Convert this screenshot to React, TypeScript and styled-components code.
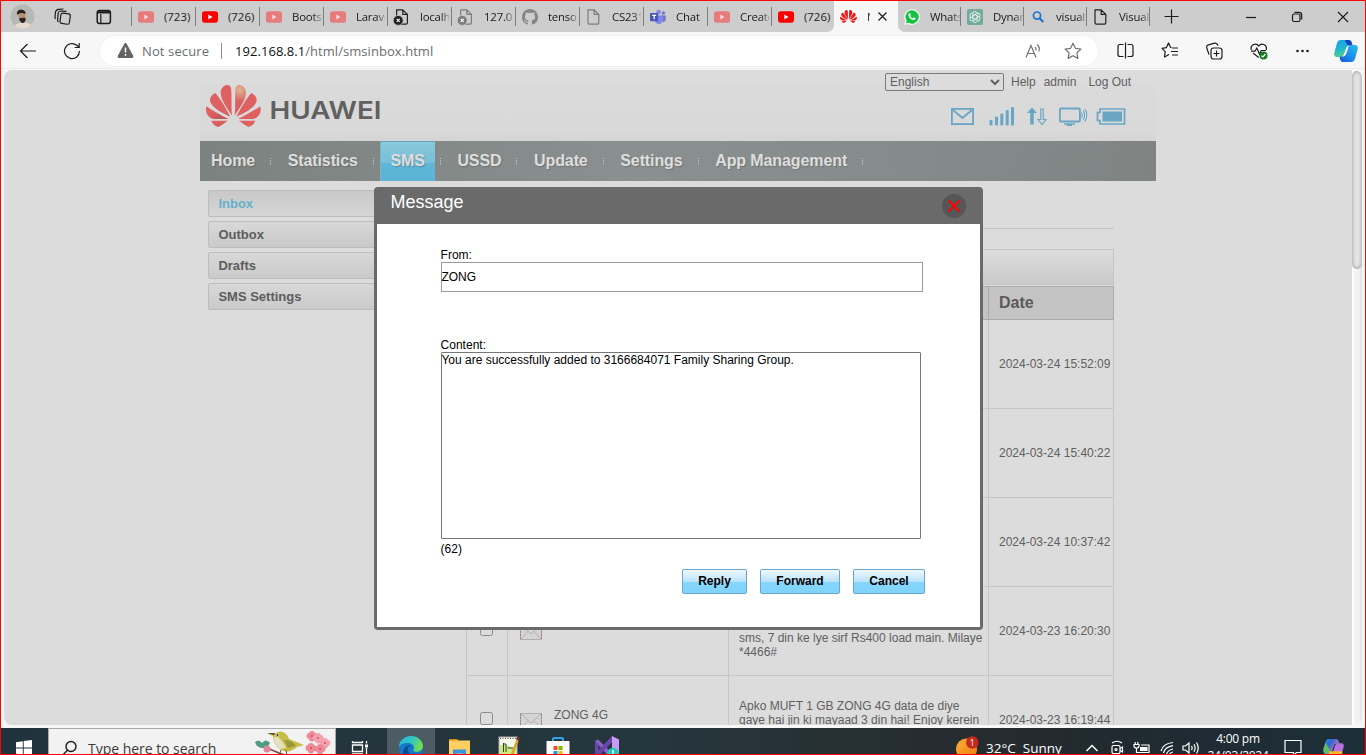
import React from "react";
import styled, { createGlobalStyle, css } from "styled-components";

const UI = `"Open Sans", "Noto Sans", sans-serif`;
const WEB = `"Liberation Sans", Arial, sans-serif`;

const Global = createGlobalStyle`
  *, *::before, *::after { box-sizing: border-box; }
  html, body { margin: 0; padding: 0; overflow: hidden; }
  svg { display: block; flex: none; }
`;

const Screen = styled.div`
  width: 1366px;
  height: 755px;
  border: 1px solid #fb0505;
  background: #f7f7f7;
  display: flex;
  flex-direction: column;
  overflow: hidden;
`;

/* ---------- Browser chrome ---------- */

const TabStrip = styled.div`
  height: 31px;
  flex: none;
  display: flex;
  background: #f7f7f7;
`;

const StripTools = styled.div`
  width: 130px;
  display: flex;
  align-items: center;
  padding-left: 9px;
  flex: none;
`;

const StripTool = styled.div<{ $before: number }>`
  margin-left: ${(p) => p.$before}px;
`;

const Tab = styled.div<{ $w: number }>`
  width: ${(p) => p.$w}px;
  flex: none;
  display: flex;
  align-items: center;
  padding-left: 6px;
`;

const TabDivider = styled.span`
  width: 1px;
  height: 19px;
  margin-top: 6px;
  background: #7d7d7d;
  flex: none;
`;

const TabTitle = styled.span<{ $w?: number }>`
  width: ${(p) => p.$w ?? 29}px;
  margin-left: 10px;
  overflow: hidden;
  white-space: nowrap;
  font: 11.4px/16px ${UI};
  letter-spacing: -0.2px;
  color: #1b1b1b;
  mask-image: linear-gradient(to right, #000 72%, rgba(0, 0, 0, 0.25));
`;

const FullTitle = styled(TabTitle)`
  mask-image: none;
  letter-spacing: 0;
`;

const ActiveTab = styled.div`
  width: 64px;
  flex: none;
  display: flex;
  align-items: center;
  padding-left: 6px;
  background: #f7f7f7;
  border-radius: 8px 8px 0 0;
`;

const CloseTab = styled.div`
  margin: 0 10px 0 auto;
`;

const StripSide = styled.div<{ $side: "left" | "right" }>`
  display: flex;
  background: #cdcdcd;
  ${(p) =>
    p.$side === "left"
      ? css`
          border-bottom-right-radius: 7px;
        `
      : css`
          border-bottom-left-radius: 7px;
          flex: 1;
        `}
`;

const WindowButtons = styled.div`
  margin-left: auto;
  display: flex;
  align-items: center;
  gap: 34px;
  padding-right: 16px;
`;

const NewTab = styled.div`
  display: flex;
  align-items: center;
  padding-left: 14px;
`;

const Toolbar = styled.div`
  height: 37px;
  flex: none;
  display: flex;
  align-items: center;
  padding: 1px 0 0 18px;
  border-bottom: 1px solid #ededed;
`;

const Reload = styled.div`
  margin-left: 26px;
`;

const AddressBar = styled.div`
  width: 998px;
  height: 30px;
  margin-left: 19px;
  padding: 0 16px 0 17px;
  border-radius: 15px;
  background: #fff;
  box-shadow: 0 0 2px rgba(0, 0, 0, 0.08);
  display: flex;
  align-items: center;
  font: 13px/20px ${UI};
  color: #6d6d6d;
`;

const NotSecure = styled.span`
  margin-left: 8px;
  width: 69px;
  white-space: nowrap;
  letter-spacing: 0.12px;
`;

const AddressDivider = styled.span`
  width: 1px;
  height: 16px;
  margin: 0 13px 0 10px;
  background: #8a8a8a;
`;

const Url = styled.span`
  white-space: nowrap;
  letter-spacing: 0.05px;
  b {
    font-weight: 400;
    color: #111;
  }
`;

const AddressTools = styled.div`
  margin-left: auto;
  display: flex;
  align-items: center;
  gap: 22px;
`;

const ToolbarIcons = styled.div`
  display: flex;
  align-items: center;
  padding-left: 19px;
  gap: 26.5px;
`;

const CopilotButton = styled.div`
  margin-left: -5px;
`;

/* ---------- Web page ---------- */

const Viewport = styled.div`
  height: 655px;
  margin: 1px 3px 3px 3px;
  flex: none;
  display: flex;
  background: #f6f6f6;
  border-radius: 8px;
  overflow: hidden;
`;

const PageArea = styled.div`
  width: 1348px;
  flex: none;
  height: 655px;
  position: relative;
  overflow: hidden;
  background: #dcdcdc;
  font-family: ${WEB};
  color: #606060;
`;

const Scrollbar = styled.div`
  width: 10px;
  flex: none;
  padding-top: 1px;
  background: #f3f3f3;
  box-shadow: inset 2px 0 2px #fff, inset -2px 0 2px #e2e2e2;
`;

const Thumb = styled.div`
  width: 10px;
  height: 198px;
  border-radius: 5px;
  background: #e6e6e6;
  box-shadow: inset 0 0 4px #8f8f8f;
`;

const Page = styled.div`
  width: 956px;
  margin-left: 196px;
`;

const Header = styled.header`
  height: 71px;
  display: flex;
  justify-content: space-between;
  background: linear-gradient(#dcdcdc 0 14px, #dadada 14px, #d9d9d9 88%, #d4d4d4);
`;

const Logo = styled.div`
  display: flex;
  gap: 7px;
  padding: 15px 0 0 6px;
`;

const WordmarkSlot = styled.div`
  padding-top: 14px;
`;

const HeaderRight = styled.div`
  width: 271px;
`;

const AccountRow = styled.div`
  display: flex;
  align-items: center;
  padding-top: 3px;
  font-size: 12px;
  height: 21px;
`;

const Language = styled.select`
  width: 119px;
  height: 18px;
  padding: 0;
  font: 12px ${WEB};
  color: #606060;
  background: #dcdcdc;
  border: 1px solid #7a7a7a;
  border-radius: 2px;
`;

const AccountLink = styled.a<{ $gap: number }>`
  margin-left: ${(p) => p.$gap}px;
  white-space: nowrap;
`;

const StatusRow = styled.div`
  display: flex;
  align-items: center;
  height: 20px;
  margin: 15px 0 0 66px;
`;

const StatusIcon = styled.div<{ $before: number }>`
  margin-left: ${(p) => p.$before}px;
`;

const Nav = styled.nav`
  height: 40px;
  display: flex;
  align-items: center;
  padding-left: 1px;
  background: linear-gradient(100deg, #7c8280 0%, #8a8f8f 45%, #868c8c 70%, #7f8483 100%);
`;

const NavItem = styled.a<{ $active?: boolean }>`
  height: 40px;
  padding: 0 10px;
  font: bold 16px/39px ${WEB};
  letter-spacing: -0.1px;
  color: #dedede;
  white-space: nowrap;
  text-shadow: 1px 1px 1px rgba(70, 70, 70, 0.35);
  ${(p) =>
    p.$active &&
    css`
      background: linear-gradient(#8cc9db, #77bfd8 54%, #5fb6d6 55%, #5cb4d6);
      box-shadow: inset 0 1px 0 #67a5ba, inset 1px 0 0 #77b4c8;
    `}
`;

const NavDots = styled.span`
  width: 1px;
  height: 8px;
  margin: 2px 6.6px 0 5px;
  background: repeating-linear-gradient(#c3c6c6 0 1px, transparent 1px 2px);
`;

const Body = styled.div`
  display: flex;
  padding: 9px 0 0 8px;
`;

const Sidebar = styled.div`
  width: 220px;
  display: flex;
  flex-direction: column;
  gap: 4px;
`;

const SideLink = styled.a<{ $active?: boolean }>`
  height: 27px;
  padding-left: 9.4px;
  border: 1px solid #bdbdbd;
  border-radius: 2px;
  font: bold 13px/25px ${WEB};
  color: ${(p) => (p.$active ? "#66b0c9" : "#5c5c5c")};
  background: ${(p) => (p.$active ? "linear-gradient(#c8c8c8, #d6d6d6)" : "linear-gradient(#d8d8d8, #cacaca)")};
`;

const Main = styled.div`
  width: 648px;
  margin-left: 38px;
`;

const TitleArea = styled.div`
  height: 39px;
  border-bottom: 1px solid #c4c4c4;
`;

const ActionStrip = styled.div`
  height: 36px;
  margin-top: 20px;
  border: 1px solid #c6c6c6;
  background: linear-gradient(#dcdcdc, #cbcbcb);
`;

const Table = styled.div`
  margin-top: 1px;
  font-size: 12px;
`;

const Row = styled.div<{ $head?: boolean }>`
  display: grid;
  grid-template-columns: 41px 221px 260px 125px;
  height: ${(p) => (p.$head ? 34 : 89)}px;
  border: solid ${(p) => (p.$head ? "#ababab" : "#c6c6c6")};
  border-width: ${(p) => (p.$head ? "1px 0 1px 1px" : "0 0 1px 1px")};
  background: ${(p) => (p.$head ? "#c4c4c4" : "transparent")};
`;

const Cell = styled.div<{ $head?: boolean; $center?: boolean }>`
  display: flex;
  align-items: center;
  padding-left: 10px;
  border-right: 1px solid ${(p) => (p.$head ? "#ababab" : "#c6c6c6")};
  line-height: 14px;
  white-space: nowrap;
  ${(p) =>
    p.$head &&
    css`
      font-size: 16px;
      font-weight: bold;
      color: #5a5a5a;
    `}
  ${(p) =>
    p.$center &&
    css`
      justify-content: center;
      padding: 0 1px 0 0;
    `}
`;

const Line = styled.div`
  height: 14px;
`;

const EnvelopeSlot = styled.span`
  padding: 2px 0 0 2px;
`;

const Sender = styled.span`
  margin: -11px 0 0 12px;
`;

const CheckBox = styled.span`
  width: 13px;
  height: 13px;
  margin-top: -4px;
  border: 1px solid #8b8b8b;
  border-radius: 2.5px;
`;

/* ---------- Message dialog ---------- */

const Dialog = styled.div`
  position: absolute;
  left: 370px;
  top: 117px;
  width: 609px;
  height: 443px;
  padding: 0 3px 3px;
  border-radius: 4px;
  background: #6a6a6a;
  color: #000;
  font-size: 12px;
`;

const DialogHead = styled.div`
  height: 37px;
  display: flex;
  justify-content: space-between;
  padding: 0 14px 0 13.5px;
  color: #fff;
  font-size: 18px;
  line-height: 30px;
`;

const CloseButton = styled.span`
  width: 24px;
  height: 24px;
  margin-top: 7px;
  border-radius: 50%;
  background: #565656;
  display: grid;
  place-items: center;
`;

const DialogBody = styled.div`
  height: 403px;
  padding: 24px 0 0 64px;
  background: #fff;
  display: flex;
  flex-direction: column;
`;

const Label = styled.label`
  height: 14px;
  line-height: 14px;
  text-indent: -0.4px;
`;

const FromField = styled.div`
  width: 482px;
  height: 30px;
  margin-bottom: 46px;
  border: 1px solid #999;
  line-height: 28px;
  text-indent: -0.6px;
`;

const ContentField = styled.div`
  width: 480px;
  height: 187px;
  border: 1px solid #767676;
  border-radius: 1px;
  line-height: 14px;
  text-indent: -0.6px;
`;

const Counter = styled.span`
  height: 14px;
  margin-top: 3px;
  line-height: 14px;
  text-indent: -0.4px;
`;

const Buttons = styled.div`
  width: 484px;
  margin-top: 13px;
  display: flex;
  justify-content: flex-end;
  gap: 13px;
`;

const ActionButton = styled.button<{ $w: number }>`
  width: ${(p) => p.$w}px;
  height: 25px;
  padding: 0 0 2px;
  border: 1px solid #6ba6d0;
  border-radius: 2px;
  background: linear-gradient(#f1f9ff, #b9e3fa 50%, #84d6fd 54%, #80d4fc);
  font: bold 12px ${WEB};
  color: #000;
`;

/* ---------- Taskbar ---------- */

const Taskbar = styled.div`
  height: 26px;
  flex: none;
  overflow: hidden;
`;

const TaskbarInner = styled.div`
  height: 40px;
  display: flex;
  background: linear-gradient(90deg, #20333c, #26363d 48%, #262b2e 72%, #202a30 82%, #1d2f39);
`;

const TaskSlot = styled.div<{ $w: number; $on?: boolean; $shift?: number }>`
  width: ${(p) => p.$w}px;
  flex: none;
  display: flex;
  align-items: center;
  justify-content: center;
  padding-right: ${(p) => p.$shift ?? 0}px;
  background: ${(p) => (p.$on ? "#4d5b62" : "transparent")};
`;

const SearchBox = styled.div`
  width: 288px;
  flex: none;
  display: flex;
  align-items: center;
  padding-left: 12px;
  border: 1px solid #a9a9a9;
  background: #f2f2f2;
  font: 14px/20px ${UI};
  color: #3c3c3c;
`;

const SearchText = styled.span`
  width: 160px;
  margin-left: 10px;
  padding-top: 1px;
  white-space: nowrap;
  letter-spacing: -0.03px;
`;

const BirdSlot = styled.div`
  margin-left: 11px;
`;

const Tray = styled.div`
  margin-left: auto;
  display: flex;
  align-items: center;
  color: #fff;
  font: 13.5px/20px ${UI};
`;

const Weather = styled.span`
  width: 78px;
  margin: 0 21px 0 7px;
  white-space: pre;
`;

const TrayIcon = styled.div<{ $before: number }>`
  margin-left: ${(p) => p.$before}px;
`;

const Clock = styled.div`
  width: 64px;
  margin: -2px 14px 0 6px;
  text-align: center;
  font: 12px/17px ${UI};
  letter-spacing: -0.25px;
`;

const CopilotSlot = styled.div`
  padding: 0 21px 0 21px;
`;

/* ---------- Drawings ---------- */

const YouTube = ({ faded }: { faded?: boolean }) => (
  <svg width="16" height="16" viewBox="0 0 16 16">
    <rect x="0" y="2.2" width="16" height="11.6" rx="2.8" fill={faded ? "#e67c7c" : "#fe0000"} />
    <path d="M6.3 5.6 L10.6 8 L6.3 10.4Z" fill={faded ? "#f2dada" : "#fff"} />
  </svg>
);

const PageIcon = ({ color = "#222", blocked }: { color?: string; blocked?: boolean }) => (
  <svg width="16" height="16" viewBox="0 0 16 16" fill="none" stroke={color} strokeWidth="1.2" overflow="visible">
    <g transform={blocked ? "translate(0 0)" : "translate(-.6 0)"}>
      <path d="M2.6 .8 H8.8 L13.4 5.4 V13.8 Q13.4 15.2 12 15.2 H4 Q2.6 15.2 2.6 13.8Z M8.8 .8 V5.4 H13.4" strokeLinejoin="round" />
    </g>
    {blocked && (
      <>
        <circle cx="4.2" cy="11.4" r="5" fill={color} stroke="#cdcdcd" strokeWidth=".8" />
        <path d="M2.7 9.9 L5.7 12.9 M5.7 9.9 L2.7 12.9" stroke="#fff" strokeWidth="1.1" />
      </>
    )}
  </svg>
);

const GitHub = () => (
  <svg width="16" height="16" viewBox="0 0 16 16" fill="#858585">
    <path d="M8 0C3.58 0 0 3.58 0 8c0 3.54 2.29 6.53 5.47 7.59.4.07.55-.17.55-.38 0-.19-.01-.82-.01-1.49-2.01.37-2.53-.49-2.69-.94-.09-.23-.48-.94-.82-1.13-.28-.15-.68-.52-.01-.53.63-.01 1.08.58 1.23.82.72 1.21 1.87.87 2.33.66.07-.52.28-.87.51-1.07-1.78-.2-3.64-.89-3.64-3.95 0-.87.31-1.59.82-2.15-.08-.2-.36-1.02.08-2.12 0 0 .67-.21 2.2.82.64-.18 1.32-.27 2-.27s1.36.09 2 .27c1.53-1.04 2.2-.82 2.2-.82.44 1.1.16 1.92.08 2.12.51.56.82 1.27.82 2.15 0 3.07-1.87 3.75-3.65 3.95.29.25.54.73.54 1.48 0 1.07-.01 1.93-.01 2.2 0 .21.15.46.55.38A8.01 8.01 0 0016 8c0-4.42-3.58-8-8-8z" />
  </svg>
);

const Teams = () => (
  <svg width="16" height="16" viewBox="0 0 16 16">
    <circle cx="13.4" cy="4" r="1.7" fill="#7177cf" />
    <path d="M10 6.4h5.8v4.2q0 2.4-2.4 2.6z" fill="#7177cf" />
    <circle cx="8.6" cy="3" r="2.3" fill="#8088e2" />
    <path d="M5 6.4h8v4.5q-.4 4-4.2 4.2-3.2 0-3.8-3z" fill="#8088e2" />
    <rect x="0" y="4" width="8.2" height="8.2" rx=".8" fill="#4b53bc" />
    <path d="M2.2 6.3h4M4.2 6.3v4" stroke="#fff" strokeWidth="1.2" />
  </svg>
);

const WhatsApp = () => (
  <svg width="16" height="16" viewBox="0 0 16 16">
    <path d="M8 .2a7.8 7.8 0 1 1-3.6 14.7L.3 15.8l1-4A7.8 7.8 0 0 1 8 .2Z" fill="#fff" />
    <path d="M8 1.3a6.7 6.7 0 1 1-3.3 12.5l-2.8.7.8-2.7A6.7 6.7 0 0 1 8 1.3Z" fill="#14c143" />
    <path d="M5.4 4.3c.5-.3.9 0 1 .4l.5 1.2-.7 1c.6 1.2 1.4 1.9 2.6 2.4l1-1 1.7.8c.4.8-.5 2-1.700 2-2.600-.2-5.400-2.900-5.400-5.300 0-.7.5-1.200 1-1.500Z" fill="#fff" />
  </svg>
);

const ChatGpt = () => (
  <svg width="16" height="16" viewBox="0 0 16 16" fill="none">
    <rect width="16" height="16" rx="2" fill="#74aa9c" />
    <g stroke="#e4f1ed" strokeWidth=".9">
      {[0, 60, 120, 180, 240, 300].map((a) => (
        <path key={a} transform={`rotate(${a} 8 8)`} d="M5.9 8 V4.6 Q6 2.6 8 2.5 Q9.6 2.5 10.3 3.9 M5.9 6.7 L8.9 5" />
      ))}
    </g>
  </svg>
);

const PETALS = [
  "M134 152 C137 128 134 90 137 68 Q141 59 150 60 Q164 62 168 80 C170 100 150 130 134 152Z",
  "M139 156 C150 135 165 105 184 84 C196 90 201 98 200 108 C196 128 165 145 139 156Z",
  "M144 163 C165 152 195 136 211 124 C214 140 210 158 188 163Z",
  "M147 168 L196 168 C192 180 180 187 174 186 C165 181 156 175 147 168Z",
];

const Flower = ({ w, h, bright }: { w: number; h: number; bright?: boolean }) => (
  <svg width={w} height={h} viewBox="48 60 165 127" preserveAspectRatio="none">
    <defs>
      <radialGradient id="glow" cx="150" cy="74" r="36" gradientUnits="userSpaceOnUse">
        <stop offset="0" stopColor="#dcb893" />
        <stop offset="1" stopColor="#dc6060" />
      </radialGradient>
      <linearGradient id="shade" x1="0" y1="1" x2="1" y2="0">
        <stop offset="0" stopColor="#b05252" />
        <stop offset=".6" stopColor="#e06060" />
      </linearGradient>
    </defs>
    {bright && <rect x="48" y="60" width="165" height="127" fill="#fff" />}
    {PETALS.map((d, i) => (
      <React.Fragment key={i}>
        <path d={d} fill={bright ? "#f01818" : i === 0 ? "url(#glow)" : "#df6060"} />
        <path d={d} transform="translate(260 0) scale(-1 1)" fill={bright ? "#f01818" : i > 1 ? "url(#shade)" : "#df6060"} />
      </React.Fragment>
    ))}
  </svg>
);

const Wordmark = () => (
  <svg width="116" height="24" viewBox="0 0 116 24">
    <text x="1.500" y="20.300" fontFamily="Inter, sans-serif" fontSize="24.500" fontWeight="600" fill="#606060" textLength="112" lengthAdjust="spacingAndGlyphs">
      HUAWEI
    </text>
  </svg>
);

const Envelope = () => (
  <svg width="22" height="16" viewBox="0 0 22 16" fill="none" stroke="#b0b0b0">
    <rect x=".5" y=".5" width="21" height="15" fill="#d4d4d4" stroke="#b0b0b0" />
    <path d="M1 1 L11 10 L21 1 M1 15 L8 7.5 M21 15 L14 7.5" />
    <path d="M.5 1V15M21.5 1V15" stroke="#cc7373" strokeDasharray="2 4" />
    <path d="M.5 4V15M21.5 4V15" stroke="#7386bb" strokeDasharray="2 4" />
  </svg>
);

const BLUE = "#6aa6c4";

const StatusIcons = () => (
  <StatusRow>
    <svg width="23" height="17" viewBox="0 0 23 17" fill="none" stroke={BLUE} strokeWidth="1.8">
      <rect x=".9" y=".9" width="21.2" height="15.2" />
      <path d="M2 2 L11.5 10 L21 2" />
    </svg>
    <StatusIcon $before={15}>
      <svg width="26" height="19" viewBox="0 0 26 19" fill={BLUE}>
        <rect x=".5" y="13" width="3" height="5.5" rx="1" />
        <rect x="6" y="9.5" width="3" height="9" rx="1" />
        <rect x="11.3" y="6.5" width="3" height="12" rx="1" />
        <rect x="16.7" y="3" width="3" height="15.5" rx="1" />
        <rect x="22" y="0" width="3" height="18.5" rx="1" />
      </svg>
    </StatusIcon>
    <StatusIcon $before={12}>
      <svg width="20" height="19" viewBox="0 0 20 19" fill="none" stroke={BLUE}>
        <path d="M5 .5 L10 6 H6.8 V17.5 H3.2 V6 H0Z" fill={BLUE} stroke="none" />
        <path d="M13.8 2 H16.2 V12.5 H19 L15 17.5 L11 12.5 H13.8Z" strokeWidth="1.2" />
      </svg>
    </StatusIcon>
    <StatusIcon $before={11}>
      <svg width="30" height="19" viewBox="0 0 30 19" fill="none" stroke={BLUE}>
        <rect x="1.9" y="1.5" width="20" height="13" rx="1" strokeWidth="1.8" />
        <path d="M6 17 H17 M9 18.2 H14" strokeWidth="1.5" />
        <path d="M23.500 5.500 Q25 8 23.500 11 M25.300 3.500 Q27.800 8 25.300 13 M27 2 Q30.500 8 27 14.500" strokeWidth="1.1" />
      </svg>
    </StatusIcon>
    <StatusIcon $before={8}>
      <svg width="30" height="17" viewBox="0 0 30 17" fill="none">
        <path d="M4 1 H28.500 V16 H4 V12.500 H1.500 V4.500 H4Z" stroke={BLUE} strokeWidth="1.700" />
        <rect x="6.500" y="3.500" width="19.500" height="10" fill={BLUE} />
      </svg>
    </StatusIcon>
  </StatusRow>
);

const Bird = () => (
  <svg width="80" height="40" viewBox="0 0 80 40">
    <path d="M2 17 L12 20 L24 25 L40 31" stroke="#765047" strokeWidth="1.800" fill="none" />
    <path d="M0 14 Q4 11 7 15 Q11 10 15 15 Q13 20 8 20 Q2 20 0 14Z" fill="#4f9e82" />
    <circle cx="12" cy="21" r="3.500" fill="#e5849a" />
    <path d="M12 5.500 L20 5.500 Q24 2.500 28 4 Q33 7 34 11 L49 17 L42 19 Q34 26 26 22 Q18 17 18 8Z" fill="#c6bd45" />
    <path d="M19 9 Q18 16 25 21 L31 20 Q28 13 23 9Z" fill="#e3e0c0" />
    <path d="M29 12 Q36 11 41 18 L33 20Z" fill="#99983b" />
    <path d="M12 5.200 L20 5 L19 7Z" fill="#4a4336" />
    <circle cx="22.500" cy="7" r="1.300" fill="#2d2d20" stroke="#eee" strokeWidth=".6" />
    <path d="M26 22 L24 28 M31 22 L32 28" stroke="#6b5543" />
    {[[57, 8], [63, 10], [56, 20], [70, 15], [65, 21]].map(([x, y], i) => (
      <g key={i} fill={i % 2 ? "#f3a3ae" : "#ef8897"}>
        <circle cx={x} cy={y - 2} r="3" />
        <circle cx={x + 2.5} cy={y} r="3" />
        <circle cx={x - 2.5} cy={y} r="3" />
        <circle cx={x} cy={y + 2.5} r="3" />
        <circle cx={x} cy={y} r="1" fill="#cb4a62" />
      </g>
    ))}
  </svg>
);

const EdgeLogo = () => (
  <svg width="24" height="24" viewBox="0 0 24 24">
    <defs>
      <linearGradient id="edge" x1="0" y1="0" x2="1" y2=".3">
        <stop offset="0" stopColor="#21b5e4" />
        <stop offset=".6" stopColor="#35c9b8" />
        <stop offset="1" stopColor="#70dd55" />
      </linearGradient>
    </defs>
    <circle cx="12" cy="12" r="12" fill="#1677ca" />
    <path d="M0 11 C0 4 6 0 12 0 C19 0 24 5 24 10 C24 15 18 17 14 15 C17 10 13 7 9 7 C4 7 1 9 0 11Z" fill="url(#edge)" />
    <path d="M9 12 C8 17 13 22 21 19 C17 25 5 25 4 17 C4 13 7 9 11 9 C12 10 9 10 9 12Z" fill="#0c4d91" />
  </svg>
);

const Copilot = ({ size }: { size: number }) => (
  <svg width={size} height={size} viewBox="0 0 24 24">
    <defs>
      <linearGradient id="cpa" x1="0" y1="0" x2=".3" y2="1">
        <stop offset="0" stopColor="#17a0e8" />
        <stop offset=".6" stopColor="#22b8cf" />
        <stop offset="1" stopColor="#53cf83" />
      </linearGradient>
      <linearGradient id="cpb" x1="1" y1="0" x2="0" y2="1">
        <stop offset="0" stopColor="#2dbdf2" />
        <stop offset=".6" stopColor="#1789e8" />
        <stop offset="1" stopColor="#1c4fd4" />
      </linearGradient>
    </defs>
    <path d="M6 1 H15 Q17.5 1 18 4 L18.5 6.5 H15 Q13 6.5 12.4 9 L10 16 Q9 18 7 18 H3 Q-.5 18 .3 14 L3 4 Q4 1 6 1Z" fill="url(#cpa)" />
    <path d="M14 1 Q17 1 17.6 4 L18.5 6.5 H14 Q12 5 11 1Z" fill="#1b3fc4" />
    <path d="M18 23 H9 Q6.5 23 6 20 L5.5 17.5 H9 Q11 17.5 11.6 15 L14 8 Q15 6 17 6 H21 Q24.5 6 23.7 10 L21 20 Q20 23 18 23Z" fill="url(#cpb)" />
    <path d="M14.500 7.500 L12.600 14 Q12 16.500 9 17.500 L10.500 14 L12 9.500 Q12.800 7 15 6.500Z" fill="#fff" />
  </svg>
);

const stroke = { fill: "none", stroke: "#1c1c1c", strokeWidth: 1.2 } as const;

const leftTabs: { icon: React.ReactNode; title: string; full?: boolean; w: number }[] = [
  { icon: <YouTube faded />, title: "(723)", full: true, w: 63 },
  { icon: <YouTube />, title: "(726)", full: true, w: 63 },
  { icon: <YouTube faded />, title: "Bootstrap", w: 63 },
  { icon: <YouTube faded />, title: "Laravel", w: 63 },
  { icon: <PageIcon blocked />, title: "localhost", w: 63 },
  { icon: <PageIcon blocked color="#7c7c7c" />, title: "127.0.0.1", w: 63 },
  { icon: <GitHub />, title: "tensor", w: 63 },
  { icon: <PageIcon color="#7c7c7c" />, title: "CS231n", w: 63 },
  { icon: <Teams />, title: "Chat | M", w: 63 },
  { icon: <YouTube faded />, title: "Create", w: 63 },
  { icon: <YouTube />, title: "(726)", full: true, w: 62 },
];

const rightTabs: { icon: React.ReactNode; title: string }[] = [
  { icon: <WhatsApp />, title: "WhatsApp" },
  { icon: <ChatGpt />, title: "Dynamic" },
  {
    icon: (
      <svg width="16" height="16" viewBox="0 0 16 16" fill="none" stroke="#1b74d0" strokeWidth="1.7">
        <circle cx="7" cy="6.600" r="3.600" />
        <path d="M9.700 9.300 L13.300 13" strokeWidth="2" />
      </svg>
    ),
    title: "visual s",
  },
  { icon: <PageIcon />, title: "Visual S" },
];

const Chrome = () => (
  <>
    <TabStrip>
      <StripSide $side="left">
        <StripTools>
          <svg width="25" height="25" viewBox="0 0 25 25">
            <defs>
              <clipPath id="face">
                <circle cx="12.5" cy="12.5" r="12" />
              </clipPath>
            </defs>
            <g clipPath="url(#face)">
              <rect width="25" height="25" fill="#b7b9b3" />
              <path d="M3 25 Q5 18 12 19 Q20 17 24 25Z" fill="#e8d9d0" />
              <path d="M7.5 9 Q11 6 15 9 L15.500 15 Q14 19 10 17Z" fill="#b98e76" />
              <path d="M7 11 Q6 6 11 5.500 Q16 6 15.500 10 Q12 8 8 10Z M9 14.500 Q12 13.500 15.500 14 Q16 19 12 19 Q9.500 18 9 14.500Z" fill="#2b211e" />
            </g>
          </svg>
          <StripTool $before={19}>
            <svg width="18" height="18" viewBox="0 0 18 18" {...stroke} strokeWidth={1.2}>
              <rect x="6.500" y="5.500" width="9.500" height="10.500" rx="2" transform="rotate(8 12 10)" />
              <path d="M4.500 14 Q3.500 13.500 3.600 12 L4.200 5 Q4.500 3 6.500 3 L12.500 3.300 M1.500 11 Q.8 10 1 8.500 L1.500 4 Q2 1.500 4.500 1.300 L9.500 1" />
            </svg>
          </StripTool>
          <StripTool $before={24}>
            <svg width="16" height="16" viewBox="0 0 16 16" {...stroke} strokeWidth={1.5}>
              <rect x="1.2" y="1.5" width="13.2" height="13" rx="2.2" />
              <path d="M1.5 3.300 H14.300" strokeWidth="2.300" />
              <path d="M4.800 5 V14" strokeWidth="1.200" />
            </svg>
          </StripTool>
        </StripTools>
        {leftTabs.map((t, i) => (
          <React.Fragment key={i}>
            <TabDivider />
            <Tab $w={t.w}>
              {t.icon}
              {t.full ? <FullTitle>{t.title}</FullTitle> : <TabTitle>{t.title}</TabTitle>}
            </Tab>
          </React.Fragment>
        ))}
      </StripSide>
      <ActiveTab>
        <Flower w={17} h={13} bright />
        <TabTitle $w={3}>M</TabTitle>
        <CloseTab>
          <svg width="11" height="11" viewBox="0 0 11 11" {...stroke}>
            <path d="M1.5 1.5 L9.5 9.5 M9.5 1.5 L1.5 9.5" />
          </svg>
        </CloseTab>
      </ActiveTab>
      <StripSide $side="right">
        {rightTabs.map((t, i) => (
          <React.Fragment key={i}>
            <Tab $w={62}>
              {t.icon}
              <TabTitle $w={30}>{t.title}</TabTitle>
            </Tab>
            <TabDivider />
          </React.Fragment>
        ))}
        <NewTab>
          <svg width="15" height="15" viewBox="0 0 15 15" {...stroke}>
            <path d="M7.5 .5 V14.5 M.5 7.5 H14.5" />
          </svg>
        </NewTab>
        <WindowButtons>
          <svg width="12" height="12" viewBox="0 0 12 12" {...stroke}>
            <path d="M1 6.5 H11" />
          </svg>
          <svg width="12" height="12" viewBox="0 0 12 12" {...stroke}>
            <rect x="1.5" y="3" width="7.5" height="7.5" rx="1.5" />
            <path d="M3.5 1.3 H8 Q10.7 1.3 10.7 4 V8.5" />
          </svg>
          <svg width="12" height="12" viewBox="0 0 12 12" {...stroke}>
            <path d="M1 1 L11 11 M11 1 L1 11" />
          </svg>
        </WindowButtons>
      </StripSide>
    </TabStrip>
    <Toolbar>
      <svg width="18" height="18" viewBox="0 0 18 18" {...stroke}>
        <path d="M17 9 H1.5 M8.5 2 L1.5 9 L8.5 16" />
      </svg>
      <Reload>
        <svg width="18" height="18" viewBox="0 0 18 18" {...stroke}>
          <path d="M16.5 9 A7.5 7.5 0 1 1 13.8 3.3 L16 5.2 M16.2 1 V5.5 H11.7" />
        </svg>
      </Reload>
      <AddressBar>
        <svg width="17" height="17" viewBox="0 0 17 17">
          <path d="M8.5 1 Q9.3 1 9.8 2 L16.3 14 Q16.8 15.8 15 16 H2 Q.2 15.8 .7 14 L7.2 2 Q7.7 1 8.5 1Z" fill="#636363" />
          <path d="M8.5 5.5 V10.5 M8.5 12 V13.8" stroke="#fff" strokeWidth="1.5" />
        </svg>
        <NotSecure>Not secure</NotSecure>
        <AddressDivider />
        <Url>
          <b>192.168.8.1</b>/html/smsinbox.html
        </Url>
        <AddressTools>
          <svg width="17" height="16" viewBox="0 0 17 16" fill="none" stroke="#707070" strokeWidth="1.2">
            <path d="M1 14.5 L6 2.5 L11 14.5 M2.8 10.5 H9.2" />
            <path d="M10 4 Q11.5 5.5 10.8 7.5 M12 1.5 Q15.5 4 13.8 8.5" />
          </svg>
          <svg width="18" height="18" viewBox="0 0 18 18" fill="none" stroke="#707070" strokeWidth="1.2" strokeLinejoin="round">
            <path d="M9 1.3 L11.4 6.3 L16.9 7 L12.9 10.9 L13.9 16.4 L9 13.7 L4.1 16.4 L5.1 10.9 L1.1 7 L6.6 6.3Z" />
          </svg>
        </AddressTools>
      </AddressBar>
      <ToolbarIcons>
        <svg width="17" height="17" viewBox="0 0 17 17" {...stroke}>
          <path d="M6.5 2.5 H3 Q1 2.5 1 4.5 V12.5 Q1 14.5 3 14.5 H6.5 M10.5 2.5 H14 Q16 2.5 16 4.5 V12.5 Q16 14.5 14 14.5 H10.5 M8.5 .5 V16.5" />
        </svg>
        <svg width="18" height="17" viewBox="0 0 18 17" {...stroke} strokeLinejoin="round">
          <path d="M10.5 5.5 H9.7 L7.5 1 L5.3 5.7 L1 6.3 L4.2 9.7 L3.5 15 L8 12.5 M11 6 H17 M10 9.5 H17 M11 13 H17" />
        </svg>
        <svg width="18" height="18" viewBox="0 0 18 18" {...stroke}>
          <rect x="6" y="6" width="11" height="11" rx="2.5" />
          <path d="M11.5 8.5 V14.5 M8.5 11.5 H14.5 M4 12.5 L1.8 6 Q1 3.5 3.5 2.8 L9.5 1.2 Q12 .8 13 3.5" />
        </svg>
        <svg width="18" height="18" viewBox="0 0 18 18" {...stroke}>
          <path d="M1.2 8 C0 2 6.5 .5 8.7 4 C11 .5 17.5 2 16.3 8 M3 11 L8.7 15.5 M1 9.2 H5 L6.8 6 L9.5 12 L11.2 8.5 H16" />
          <circle cx="13.5" cy="13.5" r="4" fill="#127c1d" stroke="none" />
          <path d="M11.5 13.7 L13 15 L15.5 12" stroke="#fff" />
        </svg>
        <svg width="18" height="18" viewBox="0 0 18 18" fill="#1c1c1c">
          <circle cx="3.500" cy="9" r="1.3" />
          <circle cx="8.500" cy="9" r="1.3" />
          <circle cx="13.500" cy="9" r="1.3" />
        </svg>
        <CopilotButton>
          <Copilot size={24} />
        </CopilotButton>
      </ToolbarIcons>
    </Toolbar>
  </>
);

const navItems = ["Home", "Statistics", "SMS", "USSD", "Update", "Settings", "App Management"];
const sideItems = ["Inbox", "Outbox", "Drafts", "SMS Settings"];

const messages: { from: string; text: string[]; date: string }[] = [
  { from: "", text: [], date: "2024-03-24 15:52:09" },
  { from: "", text: [], date: "2024-03-24 15:40:22" },
  { from: "", text: [], date: "2024-03-24 10:37:42" },
  { from: "", text: ["", "", "sms, 7 din ke lye sirf Rs400 load main. Milaye", "*4466#"], date: "2024-03-23 16:20:30" },
  { from: "ZONG 4G", text: ["Apko MUFT 1 GB ZONG 4G data de diye", "gaye hai jin ki mayaad 3 din hai! Enjoy kerein", " "], date: "2024-03-23 16:19:44" },
];

const WebPage = () => (
  <Viewport>
    <PageArea>
      <Page>
        <Header>
          <Logo>
            <Flower w={55} h={42} />
            <WordmarkSlot>
              <Wordmark />
            </WordmarkSlot>
          </Logo>
          <HeaderRight>
            <AccountRow>
              <Language defaultValue="English">
                <option>English</option>
              </Language>
              <AccountLink $gap={7}>Help</AccountLink>
              <AccountLink $gap={8}>admin</AccountLink>
              <AccountLink $gap={12}>Log Out</AccountLink>
            </AccountRow>
            <StatusIcons />
          </HeaderRight>
        </Header>
        <Nav>
          {navItems.map((n) => (
            <React.Fragment key={n}>
              <NavItem $active={n === "SMS"}>{n}</NavItem>
              <NavDots />
            </React.Fragment>
          ))}
        </Nav>
        <Body>
          <Sidebar>
            {sideItems.map((s) => (
              <SideLink key={s} $active={s === "Inbox"}>
                {s}
              </SideLink>
            ))}
          </Sidebar>
          <Main>
            <TitleArea />
            <ActionStrip />
            <Table>
              <Row $head>
                <Cell $head />
                <Cell $head />
                <Cell $head />
                <Cell $head>Date</Cell>
              </Row>
              {messages.map((m) => (
                <Row key={m.date}>
                  <Cell $center>
                    <CheckBox />
                  </Cell>
                  <Cell>
                    <EnvelopeSlot>
                      <Envelope />
                    </EnvelopeSlot>
                    <Sender>{m.from}</Sender>
                  </Cell>
                  <Cell>
                    <div>
                      {m.text.map((l, i) => (
                        <Line key={i}>{l}</Line>
                      ))}
                    </div>
                  </Cell>
                  <Cell>{m.date}</Cell>
                </Row>
              ))}
            </Table>
          </Main>
        </Body>
      </Page>
      <Dialog>
        <DialogHead>
          Message
          <CloseButton>
            <svg width="14" height="14" viewBox="0 0 14 14" stroke="#fb0404" strokeWidth="2">
              <path d="M1.5 1.5 L12.5 12.5 M12.5 1.5 L1.5 12.5" />
            </svg>
          </CloseButton>
        </DialogHead>
        <DialogBody>
          <Label>From:</Label>
          <FromField>ZONG</FromField>
          <Label>Content:</Label>
          <ContentField>You are successfully added to 3166684071 Family Sharing Group.</ContentField>
          <Counter>(62)</Counter>
          <Buttons>
            <ActionButton $w={65}>Reply</ActionButton>
            <ActionButton $w={80}>Forward</ActionButton>
            <ActionButton $w={72}>Cancel</ActionButton>
          </Buttons>
        </DialogBody>
      </Dialog>
    </PageArea>
    <Scrollbar>
      <Thumb />
    </Scrollbar>
  </Viewport>
);

const light = { fill: "none", stroke: "#fff", strokeWidth: 1.2 } as const;

const TaskbarView = () => (
  <Taskbar>
    <TaskbarInner>
      <TaskSlot $w={47} $shift={1}>
        <svg width="16" height="16" viewBox="0 0 16 16" fill="#fff">
          <path d="M0 2.2 L6.8 1.2 V7.5 H0Z M7.7 1.1 L16 0 V7.5 H7.7Z M0 8.5 H6.8 V14.8 L0 13.8Z M7.7 8.5 H16 V16 L7.7 14.9Z" />
        </svg>
      </TaskSlot>
      <SearchBox>
        <svg width="17" height="17" viewBox="0 0 17 17" {...stroke} strokeWidth={1.4}>
          <circle cx="10" cy="6.500" r="5" />
          <path d="M6.500 10.300 L1 15.800" />
        </svg>
        <SearchText>Type here to search</SearchText>
        <BirdSlot>
          <Bird />
        </BirdSlot>
      </SearchBox>
      <TaskSlot $w={51} $shift={3}>
        <svg width="18" height="18" viewBox="0 0 18 18" {...light} strokeWidth={1.3}>
          <path d="M1.5 2 V3.5 H11.5 V2 M1.5 6 H11.5 V12.5 H1.5Z M1.5 17 V15 H11.5 V17 M15.5 2 V4.5 M15.5 9 V17" />
          <rect x="14" y="5.5" width="3" height="3" fill="#fff" stroke="none" />
        </svg>
      </TaskSlot>
      <TaskSlot $w={48} $on>
        <EdgeLogo />
      </TaskSlot>
      <TaskSlot $w={50} $shift={2}>
        <svg width="23" height="20" viewBox="0 0 23 20">
          <path d="M1 1 H9 L11 3 H1Z" fill="#da8f0c" />
          <rect x="1" y="2.5" width="21" height="17" fill="#fccf60" />
          <path d="M5 19 V11.5 H18 V19 H14.5 V15.5 H8.5 V19Z" fill="#3a93de" />
        </svg>
      </TaskSlot>
      <TaskSlot $w={48} $shift={1}>
        <svg width="22" height="24" viewBox="0 0 22 24">
          <rect x="1" y="1" width="18" height="22" fill="#f6f7e8" stroke="#aaa" />
          <path d="M2 9 H8 L18 13 V22 H2Z" fill="#cdea7a" />
          <path d="M2 2.5 H19" stroke="#555" strokeDasharray="1 1.5" />
          <path d="M5.500 7 V16 M5.500 8 H8 V16 M9.500 12 H15" stroke="#32423a" fill="none" />
          <path d="M20 3 L13 21" stroke="#e0a32d" strokeWidth="2.500" />
          <path d="M21 1 L19.5 4" stroke="#68332e" strokeWidth="3" />
        </svg>
      </TaskSlot>
      <TaskSlot $w={50}>
        <svg width="24" height="23" viewBox="0 0 24 23">
          <path d="M7 5 V2 Q7 1 8 1 H16 Q17 1 17 2 V5" fill="none" stroke="#2fa4e7" strokeWidth="2" />
          <path d="M.5 4 H23.5 V20 Q23.5 22.5 21 22.5 H3 Q.5 22.5 .5 20Z" fill="#fafafa" />
          <rect x="7.5" y="9" width="4" height="4" fill="#f25022" />
          <rect x="12.5" y="9" width="4" height="4" fill="#7fba00" />
          <rect x="7.5" y="14" width="4" height="4" fill="#00a4ef" />
          <rect x="12.5" y="14" width="4" height="4" fill="#ffb900" />
        </svg>
      </TaskSlot>
      <TaskSlot $w={50} $shift={2}>
        <svg width="24" height="24" viewBox="0 0 24 24">
          <path d="M0 5 L3 3.500 L19 19 V22 L14 21Z" fill="#8763c9" />
          <path d="M0 5 L3.500 8 V16 L0 19Z" fill="#6b45ae" />
          <path d="M0 18 L17 0 V6 L4 20Z" fill="#6b45ae" />
          <path d="M17 0 L24 3.5 V20 L17 24Z" fill="#c69af5" />
          <circle cx="18" cy="17.5" r="5.8" fill="#25c9ba" />
          <path d="M18 14 V20" stroke="#fff" strokeWidth="1.3" />
        </svg>
      </TaskSlot>
      <Tray>
        <svg width="24" height="24" viewBox="0 0 24 24">
          <defs>
            <linearGradient id="sun" x1="0" y1="0" x2="1" y2="1">
              <stop offset="0" stopColor="#fbaf32" />
              <stop offset="1" stopColor="#ee7b12" />
            </linearGradient>
          </defs>
          <circle cx="11.500" cy="13" r="10.5" fill="url(#sun)" />
          <circle cx="17.300" cy="6.500" r="6.200" fill="#c42b1c" />
          <text x="17.300" y="9.800" fontSize="8.500" fontFamily={UI} fill="#fff" textAnchor="middle">1</text>
        </svg>
        <Weather>{"32°C  Sunny"}</Weather>
        <svg width="14" height="14" viewBox="0 0 14 14" {...light} strokeWidth={1.4}>
          <path d="M1.5 10 L7 4.5 L12.5 10" />
        </svg>
        <TrayIcon $before={12}>
          <svg width="13" height="16" viewBox="0 0 13 16" {...light}>
            <path d="M1 3 Q6 -.5 11 3" />
            <rect x="1" y="5.500" width="8" height="8" rx="1.500" />
            <path d="M9 8.500 L11.500 7 V12 L9 10.500" />
            <circle cx="5" cy="9.500" r="1" />
          </svg>
        </TrayIcon>
        <TrayIcon $before={9}>
          <svg width="17" height="14" viewBox="0 0 17 14" {...light}>
            <path d="M1 3.5 H6 V5.5 Q5.5 7 3.5 7 Q1.5 7 1 5.5Z M2.2 1 V3.5 M4.8 1 V3.5 M3.5 7 V11.5 H16 V4 H8" />
            <rect x="7" y="6" width="7.500" height="4" fill="#fff" stroke="none" />
          </svg>
        </TrayIcon>
        <TrayIcon $before={10}>
          <svg width="14" height="14" viewBox="0 0 14 14" {...light}>
            <path d="M1 10 Q3 2.5 13 1.5 M3.5 12 Q5 6 13 4.7 M6.5 13 Q8 9 13 8 M9.5 13.5 Q10 11.5 13 11" />
          </svg>
        </TrayIcon>
        <TrayIcon $before={8}>
          <svg width="18" height="14" viewBox="0 0 18 14" {...light}>
            <path d="M1 5 H3.5 L7 2 V12 L3.5 9 H1Z M9.5 5 Q10.8 7 9.5 9 M12 3.2 Q14.2 7 12 10.8 M14.5 1.5 Q18 7 14.5 12.5" />
          </svg>
        </TrayIcon>
        <Clock>
          4:00 pm
          <br />
          24/03/2024
        </Clock>
        <svg width="18" height="18" viewBox="0 0 18 18" {...light}>
          <path d="M1 1.5 H17 V13.5 H12.5 L9.5 16.5 V13.5 H1Z" />
        </svg>
        <CopilotSlot>
          <svg width="21" height="21" viewBox="0 0 24 24">
            <defs>
              <linearGradient id="multi" x1="0" y1="0" x2="1" y2=".7">
                <stop offset="0" stopColor="#2c9bf0" />
                <stop offset=".4" stopColor="#2c67d8" />
                <stop offset="1" stopColor="#e77bb0" />
              </linearGradient>
            </defs>
            <path d="M6 1 H15 Q17.5 1 18 4 L18.5 6.5 H15 Q13 6.5 12.4 9 L10 16 Q9 18 7 18 H3 Q-.5 18 .3 14 L3 4 Q4 1 6 1Z" fill="url(#multi)" />
            <path d="M.5 12 L3 5 L9 16 Q8 18 6 18 H3 Q0 17 .5 12Z" fill="#5fbf62" />
            <path d="M18 23 H9 Q6.5 23 6 20 L5.5 17.5 H9 Q11 17.5 11.6 15 L14 8 Q15 6 17 6 H21 Q24.5 6 23.7 10 L21 20 Q20 23 18 23Z" fill="#b470dc" />
            <rect x="7" y="15" width="15" height="9" rx="1" fill="#f4b92a" />
          </svg>
        </CopilotSlot>
      </Tray>
    </TaskbarInner>
  </Taskbar>
);

export default function App() {
  return (
    <>
      <Global />
      <Screen>
        <Chrome />
        <WebPage />
        <TaskbarView />
      </Screen>
    </>
  );
}
